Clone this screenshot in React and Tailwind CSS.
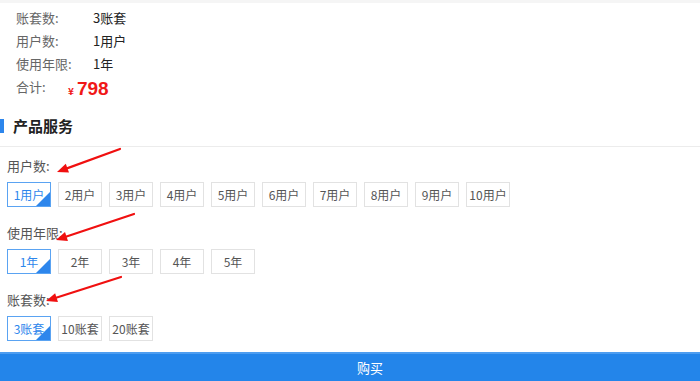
import { useState } from 'react'

const USERS = ['1用户', '2用户', '3用户', '4用户', '5用户', '6用户', '7用户', '8用户', '9用户', '10用户']
const YEARS = ['1年', '2年', '3年', '4年', '5年']
const BOOKS = ['3账套', '10账套', '20账套']

const FONT = "font-['Microsoft_YaHei','Noto_Sans_CJK_SC',sans-serif]"

function Option({ label, active, onClick }) {
  return (
    <button
      onClick={onClick}
      className={`relative w-[44px] h-[25px] overflow-hidden border text-[12px] leading-none ${
        active ? 'border-[#5aa3f2] text-[#2d86ec]' : 'border-[#e2e2e2] text-[#555]'
      }`}
    >
      {label}
      {active && (
        <span className="absolute right-0 bottom-0 w-0 h-0 border-l-[14px] border-l-transparent border-b-[14px] border-b-[#2d86ec]" />
      )}
    </button>
  )
}

function OptionGroup({ title, items, value, onChange, className }) {
  return (
    <div className={className}>
      <div className="text-[13px] text-[#555] leading-[18px] h-[18px]">{title}</div>
      <div className="flex gap-[7px] mt-[7px]">
        {items.map(it => (
          <Option key={it} label={it} active={value === it} onClick={() => onChange(it)} />
        ))}
      </div>
    </div>
  )
}

function Arrow({ x1, y1, x2, y2 }) {
  const ang = Math.atan2(y2 - y1, x2 - x1)
  const len = 12
  const w = 0.4
  const a = [x2 - len * Math.cos(ang - w), y2 - len * Math.sin(ang - w)]
  const b = [x2 - len * Math.cos(ang + w), y2 - len * Math.sin(ang + w)]
  return (
    <g>
      <line x1={x1} y1={y1} x2={x2 - 4 * Math.cos(ang)} y2={y2 - 4 * Math.sin(ang)} stroke="#f01010" strokeWidth="2.2" strokeLinecap="round" />
      <polygon points={`${x2},${y2} ${a[0]},${a[1]} ${b[0]},${b[1]}`} fill="#f01010" />
    </g>
  )
}

export default function App() {
  const [users, setUsers] = useState('1用户')
  const [years, setYears] = useState('1年')
  const [books, setBooks] = useState('3账套')

  return (
    <div className={`relative w-[700px] h-[381px] overflow-hidden bg-white ${FONT}`}>
      <div className="h-[3px] bg-[#f5f5f5]" />

      {/* summary */}
      <div className="pl-[16px] pt-[3px] text-[13px]">
        <div className="flex h-[23px] items-center">
          <span className="w-[77px] text-[#666]">账套数:</span>
          <span className="text-[#222]">{books}</span>
        </div>
        <div className="flex h-[23px] items-center">
          <span className="w-[77px] text-[#666]">用户数:</span>
          <span className="text-[#222]">{users}</span>
        </div>
        <div className="flex h-[23px] items-center">
          <span className="w-[77px] text-[#666]">使用年限:</span>
          <span className="text-[#222]">{years}</span>
        </div>
        <div className="flex h-[26px] items-start pt-[2px]">
          <span className="w-[52px] text-[#666]">合计:</span>
          <span className="text-[#f01818] font-bold flex items-baseline mt-[2px]">
            <span className="text-[10px] mr-[3px]">¥</span>
            <span className="text-[19px] leading-[20px] font-['Liberation_Sans',sans-serif]">798</span>
          </span>
        </div>
      </div>

      {/* section title */}
      <div className="flex items-center mt-[14px] h-[22px]">
        <span className="w-[4px] h-[14px] bg-[#2d86ec]" />
        <span className="ml-[9px] text-[15px] font-bold text-[#222]">产品服务</span>
      </div>
      <div className="mt-[9px] h-px bg-[#ececec]" />

      <div className="pl-[7px]">
        <OptionGroup className="mt-[10px]" title="用户数:" items={USERS} value={users} onChange={setUsers} />
        <OptionGroup className="mt-[17px]" title="使用年限:" items={YEARS} value={years} onChange={setYears} />
        <OptionGroup className="mt-[17px]" title="账套数:" items={BOOKS} value={books} onChange={setBooks} />
      </div>

      <button className="absolute left-0 right-0 bottom-0 h-[29px] pl-[40px] bg-[#2385ea] border-t-2 border-[#4d9df0] text-white text-[13px]">
        购买
      </button>

      <svg className="absolute left-0 top-0 pointer-events-none" width="700" height="381">
        <Arrow x1={120} y1={149} x2={57} y2={172} />
        <Arrow x1={134} y1={214} x2={56} y2={240} />
        <Arrow x1={121} y1={277} x2={46} y2={301} />
      </svg>
    </div>
  )
}
